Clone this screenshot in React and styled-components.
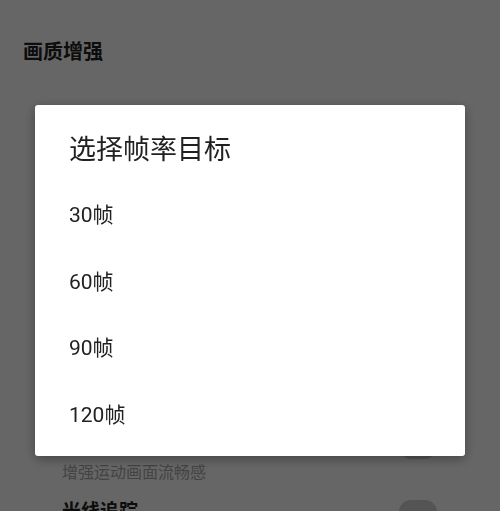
import React from 'react';
import styled, { createGlobalStyle } from 'styled-components';

const settings = [
  { title: '超分辨率', desc: '提升画面清晰度', on: true },
  { title: 'HDR 增强', desc: '扩展画面亮度范围', on: false },
  { title: '画面锐化', desc: '让边缘更加清晰', on: true },
  { title: '抗锯齿', desc: '减少画面锯齿', on: false },
  { title: '帧率目标', desc: '60帧', on: true },
  { title: '运动补偿', desc: '增强运动画面流畅感', on: false },
  { title: '光线追踪', desc: '更真实的光影效果', on: false },
  { title: '环境光遮蔽', desc: '增强阴影层次', on: false },
];

const frameRates = ['30帧', '60帧', '90帧', '120帧'];

export default function App() {
  return (
    <>
      <GlobalStyle />
      <Page>
        <Heading>画质增强</Heading>
        <List>
          {settings.map((s) => (
            <Row key={s.title}>
              <RowText>
                <RowTitle>{s.title}</RowTitle>
                <RowDesc>{s.desc}</RowDesc>
              </RowText>
              <Switch $on={s.on} />
            </Row>
          ))}
        </List>
      </Page>
      <Overlay>
        <Dialog>
          <DialogTitle>选择帧率目标</DialogTitle>
          <Options>
            {frameRates.map((f) => (
              <Option key={f}>{f}</Option>
            ))}
          </Options>
        </Dialog>
      </Overlay>
    </>
  );
}

//styled

const GlobalStyle = createGlobalStyle`
  html, body {
    margin: 0;
    padding: 0;
    overflow: hidden;
    background: #ffffff;
  }
  body {
    font-family: Roboto, "Noto Sans CJK SC", "Noto Sans", sans-serif;
  }
`;

const Page = styled.div`
  background: #ffffff;
  min-height: 100vh;
`;

const Heading = styled.h1`
  margin: 0;
  padding: 38px 0 33px 23px;
  font-size: 20px;
  line-height: 28px;
  font-weight: 700;
  color: #222222;
`;

const List = styled.div`
  display: flex;
  flex-direction: column;
`;

const Row = styled.div`
  display: flex;
  align-items: flex-start;
  justify-content: space-between;
  height: 65px;
  box-sizing: border-box;
  padding: 10px 63px 5px 62px;
`;

const RowText = styled.div`
  display: flex;
  flex-direction: column;
  gap: 2px;
`;

const RowTitle = styled.div`
  font-size: 19px;
  line-height: 26px;
  font-weight: 700;
  color: #222222;
`;

const RowDesc = styled.div`
  font-size: 16px;
  line-height: 22px;
  color: #a8a8a8;
`;

const Switch = styled.div`
  width: 38px;
  height: 24px;
  margin-top: 1px;
  border-radius: 12px;
  background: #d2d2d2;
  flex-shrink: 0;
`;

const Overlay = styled.div`
  position: fixed;
  inset: 0;
  background: rgba(0, 0, 0, 0.6);
`;

const Dialog = styled.div`
  position: absolute;
  left: 35px;
  top: 105px;
  width: 430px;
  box-sizing: border-box;
  padding: 27px 0 10px;
  background: #ffffff;
  border-radius: 3px;
  box-shadow: 0 3px 12px rgba(0, 0, 0, 0.35);
`;

const DialogTitle = styled.div`
  padding-left: 34px;
  font-size: 27px;
  line-height: 36px;
  color: #212121;
`;

const Options = styled.div`
  display: flex;
  flex-direction: column;
  margin-top: 12px;
`;

const Option = styled.div`
  display: flex;
  align-items: center;
  height: 66.5px;
  padding-left: 34px;
  font-size: 21px;
  color: #222222;
`;
